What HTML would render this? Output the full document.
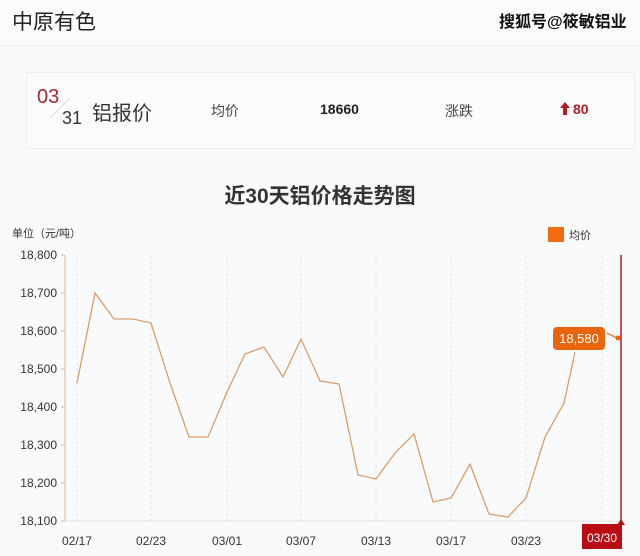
<!DOCTYPE html>
<html><head><meta charset="utf-8"><style>
body{margin:0;width:640px;height:556px;background:#f9fafc;font-family:"Liberation Sans","Noto Sans CJK SC",sans-serif;overflow:hidden;position:relative}
.hd{position:absolute;left:0;top:0;width:640px;height:45px;border-bottom:1px solid #e8eaee;background:#fafbfd}
.t{position:absolute;white-space:nowrap}
</style></head><body>
<div class="hd"></div>
<div class="t" style="left:12px;top:6px;font-size:21px;color:#222">中原有色</div>
<div class="t" style="left:499px;top:8px;font-size:16px;color:#111;font-weight:bold">搜狐号@筱敏铝业</div>
<div style="position:absolute;left:26px;top:72px;width:607px;height:75px;background:#fafbfd;border:1px solid #eceef1"></div>
<div class="t" style="left:37px;top:86px;font-size:20px;color:#a6272a">03</div>
<div class="t" style="left:62px;top:108px;font-size:18px;color:#333">31</div>
<svg style="position:absolute;left:0;top:0" width="640" height="160"><line x1="50" y1="118" x2="70" y2="98" stroke="#ddd"/></svg>
<div class="t" style="left:92px;top:97px;font-size:20px;color:#333">铝报价</div>
<div class="t" style="left:211px;top:101px;font-size:14px;color:#444">均价</div>
<div class="t" style="left:320px;top:101px;font-size:14px;color:#222;font-weight:bold">18660</div>
<div class="t" style="left:445px;top:101px;font-size:14px;color:#444">涨跌</div>
<svg style="position:absolute;left:560px;top:102px" width="12" height="13"><path d="M5 0 L10 6 L7 6 L7 13 L3 13 L3 6 L0 6Z" fill="#b11e22"/></svg>
<div class="t" style="left:573px;top:101px;font-size:14px;color:#b11e22;font-weight:bold">80</div>
<div class="t" style="left:0;width:640px;text-align:center;top:180px;font-size:21px;font-weight:bold;color:#333">近30天铝价格走势图</div>
<div class="t" style="left:12px;top:225px;font-size:11px;color:#333">单位（元/吨）</div>
<div style="position:absolute;left:548px;top:227px;width:16px;height:15px;background:#f26c0d"></div>
<div class="t" style="left:569px;top:227px;font-size:11px;color:#333">均价</div>
<svg style="position:absolute;left:0;top:0" width="640" height="556" font-family="Liberation Sans,sans-serif">
<g stroke="#e4e4e4" stroke-dasharray="3,3">
<line x1="77" y1="255" x2="77" y2="521"/><line x1="151" y1="255" x2="151" y2="521"/><line x1="227" y1="255" x2="227" y2="521"/><line x1="301" y1="255" x2="301" y2="521"/><line x1="376" y1="255" x2="376" y2="521"/><line x1="451" y1="255" x2="451" y2="521"/><line x1="526" y1="255" x2="526" y2="521"/><line x1="602" y1="255" x2="602" y2="521"/></g>
<line x1="65" y1="255" x2="65" y2="521" stroke="#e0b890"/>
<line x1="65" y1="521" x2="622" y2="521" stroke="#e4e4e4"/>
<g stroke="#e0b890"><line x1="61" y1="255" x2="65" y2="255"/><line x1="61" y1="293" x2="65" y2="293"/><line x1="61" y1="331" x2="65" y2="331"/><line x1="61" y1="369" x2="65" y2="369"/><line x1="61" y1="407" x2="65" y2="407"/><line x1="61" y1="445" x2="65" y2="445"/><line x1="61" y1="483" x2="65" y2="483"/><line x1="61" y1="521" x2="65" y2="521"/></g>
<g font-size="12" fill="#333" text-anchor="end">
<text x="57" y="259">18,800</text><text x="57" y="297">18,700</text><text x="57" y="335">18,600</text><text x="57" y="373">18,500</text><text x="57" y="411">18,400</text><text x="57" y="449">18,300</text><text x="57" y="487">18,200</text><text x="57" y="525">18,100</text></g>
<g font-size="12" fill="#333" text-anchor="middle">
<text x="77" y="545">02/17</text><text x="151" y="545">02/23</text><text x="227" y="545">03/01</text><text x="301" y="545">03/07</text><text x="376" y="545">03/13</text><text x="451" y="545">03/17</text><text x="526" y="545">03/23</text></g>
<polyline fill="none" stroke="#d9a068" stroke-width="1.3" points="77,383 95,293 114,319 133,319 151,323 170,383 189,437 208,437 227,392 245,354 264,347 283,377 301,339 320,381 339,384 358,475 376,479 395,453 414,434 433,502 451,498 470,464 489,514 508,517 526,498 545,437 564,403 575,352"/>
<line x1="621" y1="255" x2="621" y2="521" stroke="#c4121a" stroke-width="1.5"/>
<rect x="582" y="524" width="40" height="25" fill="#b80c12"/>
<text x="602" y="542" font-size="12" fill="#fff" text-anchor="middle">03/30</text>
<path d="M617 525 L621 519 L625 525Z" fill="#b80c12"/>
<rect x="553" y="327" width="52" height="23" rx="4" fill="#e8650c"/>
<text x="579" y="343" font-size="13" fill="#fff" text-anchor="middle">18,580</text>
<line x1="607" y1="333" x2="617" y2="338" stroke="#e8650c"/>
<circle cx="618" cy="338" r="2.5" fill="#e8650c"/>
</svg>
</body></html>
